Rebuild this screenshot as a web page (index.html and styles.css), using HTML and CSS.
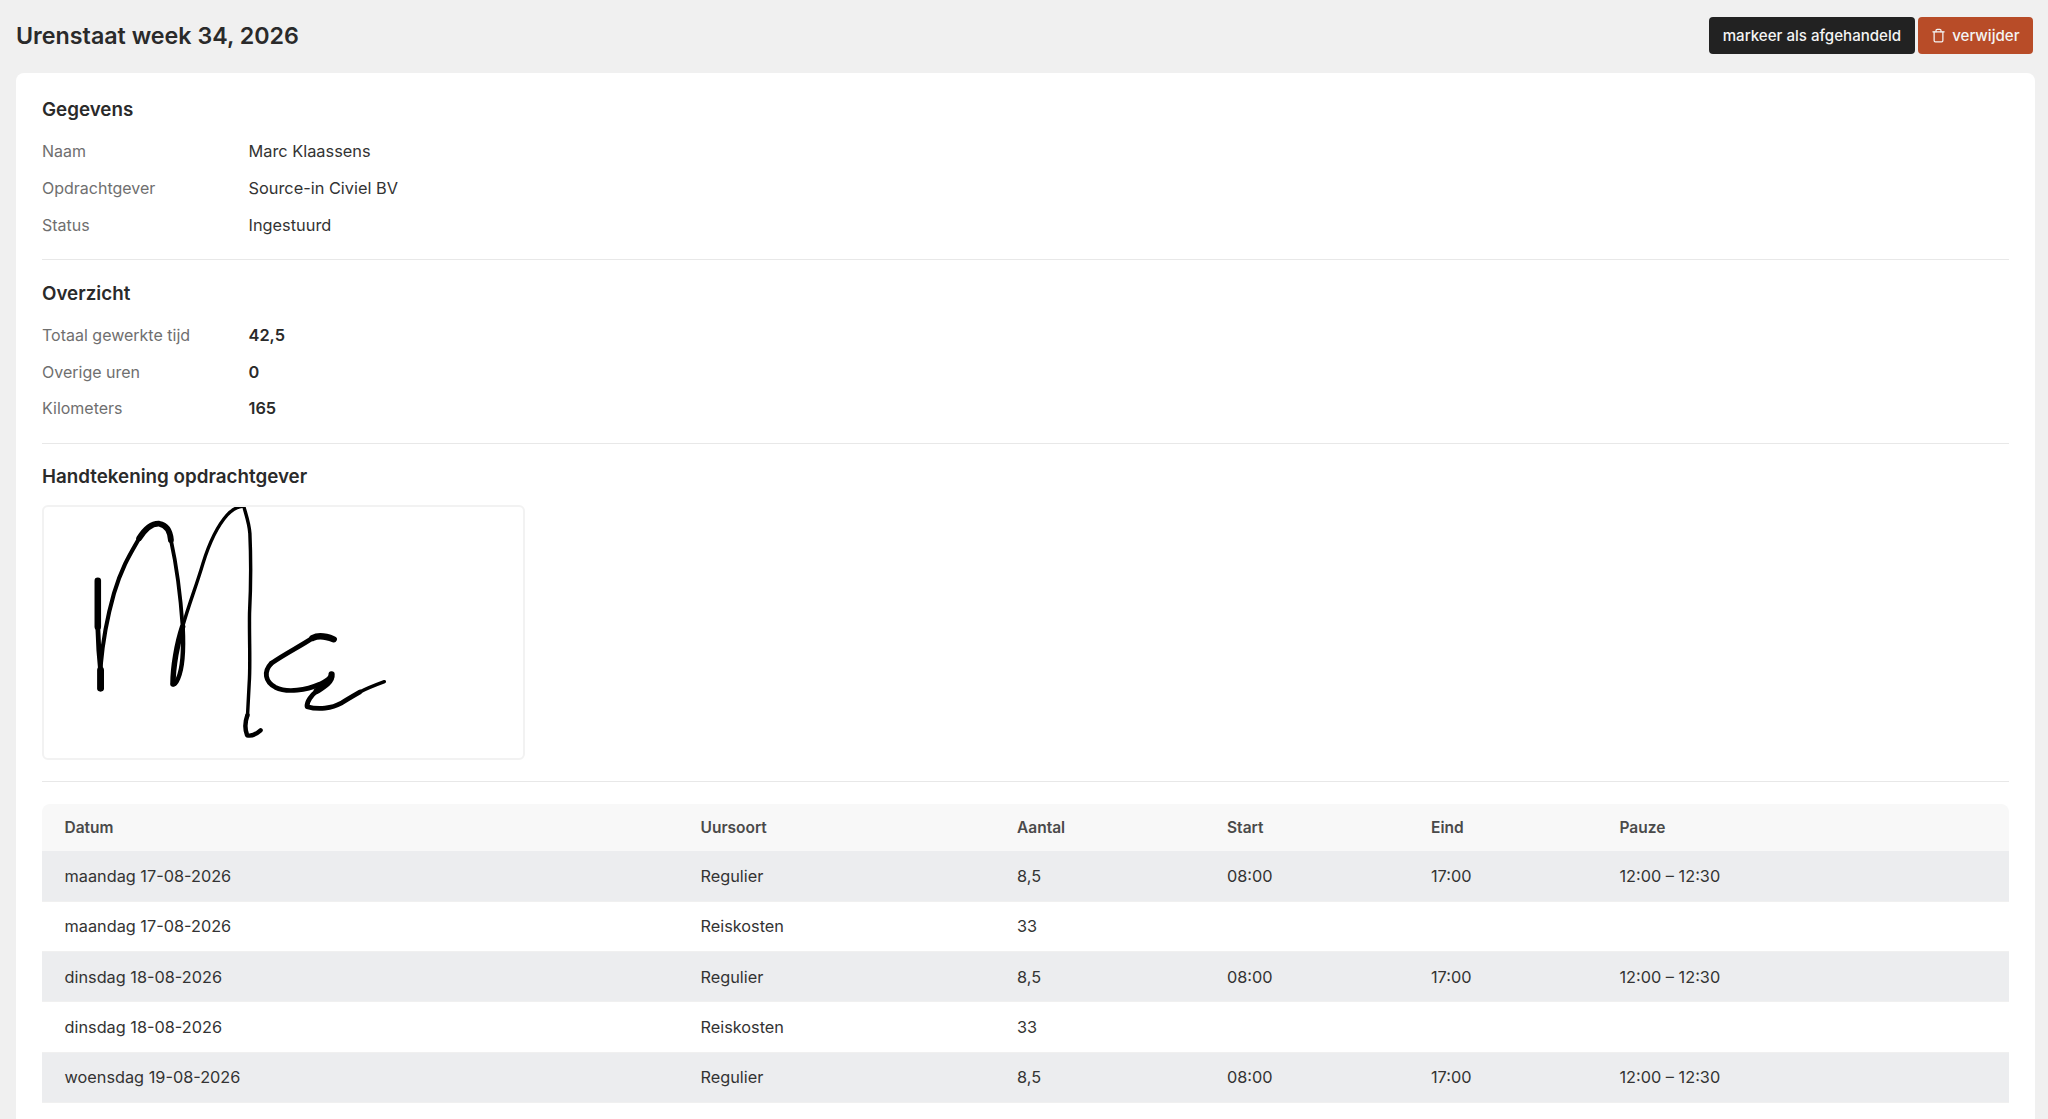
FILE: index.html
```html
<!DOCTYPE html>
<html lang="nl">
<head>
<meta charset="utf-8">
<title>Urenstaat week 34, 2026</title>
<link rel="stylesheet" href="styles.css">
</head>
<body>
<div class="page">
  <header class="topbar">
    <h1 class="title">Urenstaat week 34, 2026</h1>
    <div class="actions">
      <button class="btn btn-dark">markeer als afgehandeld</button>
      <button class="btn btn-red">
        <svg class="trash" viewBox="0 0 24 24" fill="none" stroke="currentColor" stroke-width="2" stroke-linecap="round" stroke-linejoin="round"><path d="M3 6h18"/><path d="M19 6v14a2 2 0 0 1-2 2H7a2 2 0 0 1-2-2V6"/><path d="M8 6V4a2 2 0 0 1 2-2h4a2 2 0 0 1 2 2v2"/></svg>
        verwijder
      </button>
    </div>
  </header>
  <main class="card">
    <section class="section">
      <h2 class="heading">Gegevens</h2>
      <dl class="facts">
        <dt>Naam</dt><dd>Marc Klaassens</dd>
        <dt>Opdrachtgever</dt><dd>Source-in Civiel BV</dd>
        <dt>Status</dt><dd>Ingestuurd</dd>
      </dl>
    </section>
    <section class="section">
      <h2 class="heading">Overzicht</h2>
      <dl class="facts facts-strong">
        <dt>Totaal gewerkte tijd</dt><dd>42,5</dd>
        <dt>Overige uren</dt><dd>0</dd>
        <dt>Kilometers</dt><dd>165</dd>
      </dl>
    </section>
    <section class="section section-sig">
      <h2 class="heading heading-sig">Handtekening opdrachtgever</h2>
      <div class="sigbox">
        <svg class="sig" viewBox="69 51 1389 753" preserveAspectRatio="none" fill="none" stroke="#000" stroke-linecap="round" stroke-linejoin="round">
          <path stroke-width="19" d="M225 272V410"/>
          <path stroke-width="14" d="M225 410L228 480L233 540"/>
          <path stroke-width="20" d="M233 540V595"/>
          <path stroke-width="12" d="M233 530C238 470 250 390 272 310C295 230 320 190 345 145"/>
          <path stroke-width="17" d="M345 145C365 112 385 100 403 101C425 105 435 125 437 150"/>
          <path stroke-width="11" d="M437 150C452 220 465 320 471 410"/>
          <path stroke-width="13" d="M471 410C474 470 473 530 458 565C452 580 446 585 443 582"/>
          <path stroke-width="16" d="M443 582C443 530 455 460 471 410"/>
          <path stroke-width="10" d="M471 410C490 340 510 290 530 220C545 170 570 110 600 75C615 58 632 50 648 48"/>
          <path stroke-width="10" d="M648 48C655 75 664 100 666 130C669 200 669 290 665 370C664 450 668 530 664 580L659 680"/>
          <path stroke-width="13" d="M659 675C652 695 652 720 658 736C672 740 685 732 697 721"/>
          <path stroke-width="19" d="M909 448C885 438 865 435 848 444"/>
          <path stroke-width="14" d="M848 444C810 470 770 490 728 520"/>
          <path stroke-width="14" d="M728 520C705 545 710 575 740 592C775 610 830 600 870 582C890 572 900 565 903 553"/>
          <path stroke-width="18" d="M903 553C905 575 880 590 860 603"/>
          <path stroke-width="14" d="M860 603C845 615 830 635 832 650C865 660 905 655 930 640C945 630 965 618 985 606"/>
          <path stroke-width="10" d="M985 606C1005 595 1030 585 1056 575"/>
        </svg>
      </div>
    </section>
    <table class="hours">
      <colgroup><col class="c1"><col class="c2"><col class="c3"><col class="c4"><col class="c5"><col class="c6"></colgroup>
      <thead>
        <tr><th>Datum</th><th>Uursoort</th><th>Aantal</th><th>Start</th><th>Eind</th><th>Pauze</th></tr>
      </thead>
      <tbody>
        <tr><td>maandag 17-08-2026</td><td>Regulier</td><td>8,5</td><td>08:00</td><td>17:00</td><td>12:00 – 12:30</td></tr>
        <tr><td>maandag 17-08-2026</td><td>Reiskosten</td><td>33</td><td></td><td></td><td></td></tr>
        <tr><td>dinsdag 18-08-2026</td><td>Regulier</td><td>8,5</td><td>08:00</td><td>17:00</td><td>12:00 – 12:30</td></tr>
        <tr><td>dinsdag 18-08-2026</td><td>Reiskosten</td><td>33</td><td></td><td></td><td></td></tr>
        <tr><td>woensdag 19-08-2026</td><td>Regulier</td><td>8,5</td><td>08:00</td><td>17:00</td><td>12:00 – 12:30</td></tr>
      </tbody>
    </table>
  </main>
</div>
</body>
</html>
```
FILE: styles.css
```css
* { box-sizing: border-box; }
html, body { margin: 0; height: 100%; overflow: hidden; }
body {
  background: #f0f0f0;
  color: #222;
  font-family: Inter, "Liberation Sans", sans-serif;
  font-size: 16px;
}
.page {
  height: 100vh;
  display: flex;
  flex-direction: column;
  padding: 17px 13px 0 16px;
}
.topbar {
  display: flex;
  justify-content: space-between;
  align-items: center;
  height: 37px;
  margin-bottom: 19px;
}
.title { margin: 0; font-size: 23.25px; font-weight: 600; color: #2a2a2a; }
.actions { display: flex; gap: 3px; margin-right: 2px; }
.btn {
  height: 37px;
  border: 0;
  border-radius: 4px;
  padding: 0 14px;
  color: #f4f4f4;
  font: 500 15.1px Inter, "Liberation Sans", sans-serif;
  display: flex;
  align-items: center;
  gap: 6px;
}
.btn-dark { background: #222; }
.btn-red { background: #b84c28; padding: 0 13.5px 0 13px; }
.trash { width: 15px; height: 15px; }
.card {
  flex: 1;
  background: #fff;
  border-radius: 8px 8px 0 0;
  padding: 24px 26px 0;
}
.section {
  border-bottom: 1px solid #e8e8e8;
  padding-bottom: 16px;
  margin-bottom: 20.5px;
}
.section-sig { padding-bottom: 21px; margin-bottom: 22px; }
.heading { margin: 0 0 10px; font-size: 18.8px; line-height: 26px; font-weight: 600; color: #2a2a2a; }
.heading-sig { margin-bottom: 15px; }
.facts {
  margin: 0;
  display: grid;
  grid-template-columns: 206.5px 1fr;
  grid-auto-rows: 36.7px;
  align-items: center;
}
.facts dt { color: #6f6f6f; }
.facts dd { margin: 0; color: #333; font-size: 16.35px; }
.facts-strong dd { font-weight: 600; color: #2a2a2a; }
.sigbox {
  width: 483px;
  height: 255px;
  border: 2px solid #f2f2f2;
  border-radius: 6px;
  overflow: hidden;
}
.sig { display: block; width: 100%; height: 100%; }
.hours {
  width: 100%;
  table-layout: fixed;
  border-collapse: separate;
  border-spacing: 0;
}
.c1 { width: 636px; }
.c2 { width: 316.5px; }
.c3 { width: 210px; }
.c4 { width: 204px; }
.c5 { width: 188.5px; }
.hours th, .hours td { text-align: left; padding: 0 0 0 22.5px; }
.hours th { height: 47px; background: #f8f8f8; color: #4a4a4a; font-size: 15.5px; font-weight: 600; }
.hours th:first-child { border-top-left-radius: 8px; }
.hours th:last-child { border-top-right-radius: 8px; }
.hours td { height: 50.4px; color: #333; font-size: 16.3px; border-bottom: 1px solid #f0f0f0; }
.hours tbody tr:nth-child(odd) td { background: #ecedef; }
```
